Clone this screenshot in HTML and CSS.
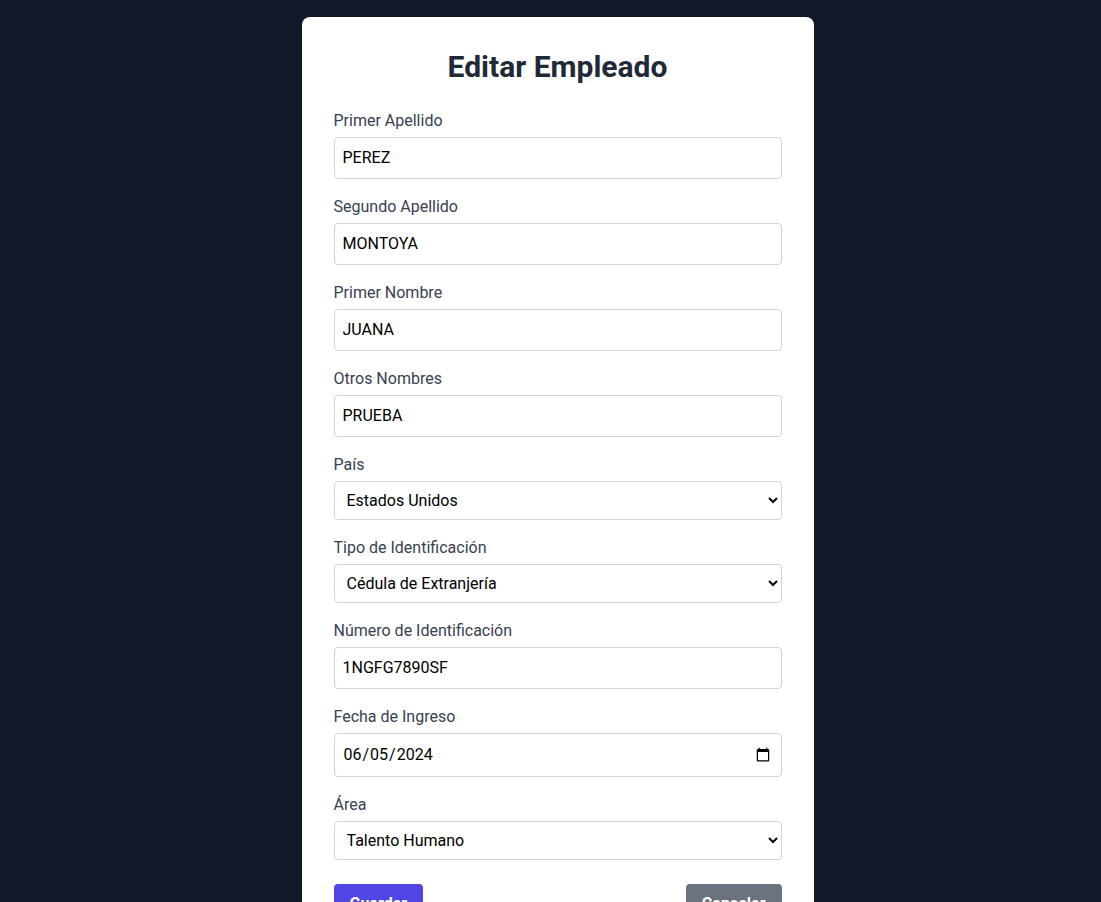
FILE: index.html
```html
<!DOCTYPE html>
<html lang="es">
<head>
<meta charset="utf-8">
<meta name="viewport" content="width=device-width, initial-scale=1">
<title>Editar Empleado</title>
<link rel="stylesheet" href="styles.css">
</head>
<body>
<main class="page">
  <form class="card">
    <h1 class="title">Editar Empleado</h1>
    <div class="field"><label for="apellido1">Primer Apellido</label><input class="control" id="apellido1" type="text" value="PEREZ"></div>
    <div class="field"><label for="apellido2">Segundo Apellido</label><input class="control" id="apellido2" type="text" value="MONTOYA"></div>
    <div class="field"><label for="nombre1">Primer Nombre</label><input class="control" id="nombre1" type="text" value="JUANA"></div>
    <div class="field"><label for="nombre2">Otros Nombres</label><input class="control" id="nombre2" type="text" value="PRUEBA"></div>
    <div class="field"><label for="pais">País</label><select class="control" id="pais"><option>Colombia</option><option selected>Estados Unidos</option></select></div>
    <div class="field"><label for="tipo">Tipo de Identificación</label><select class="control" id="tipo"><option>Cédula de Ciudadanía</option><option selected>Cédula de Extranjería</option><option>Pasaporte</option></select></div>
    <div class="field"><label for="numero">Número de Identificación</label><input class="control" id="numero" type="text" value="1NGFG7890SF"></div>
    <div class="field"><label for="fecha">Fecha de Ingreso</label><input class="control" id="fecha" type="date" value="2024-06-05"></div>
    <div class="field"><label for="area">Área</label><select class="control" id="area"><option selected>Talento Humano</option><option>Administración</option></select></div>
    <div class="actions">
      <button class="button save" type="submit">Guardar</button>
      <button class="button cancel" type="button">Cancelar</button>
    </div>
  </form>
</main>
</body>
</html>
```
FILE: styles.css
```css
*, *::before, *::after { box-sizing: border-box; }
body {
  margin: 0;
  background: #111827;
  color: #000;
  font: 16px/24px Roboto, sans-serif;
}
.page {
  display: flex;
  justify-content: center;
  padding: 17px 0 16px 14px;
}
.card {
  width: 100%;
  max-width: 512px;
  padding: 32px;
  border-radius: 8px;
  background: #fff;
}
.title {
  margin: 0 0 24px;
  color: #1f2937;
  font-size: 30px;
  line-height: 36px;
  font-weight: 700;
  text-align: center;
}
.field { margin-bottom: 16px; }
.field label { display: block; margin-bottom: 4px; color: #374151; }
.control {
  display: block;
  width: 100%;
  padding: 8px;
  border: 1px solid #d1d5db;
  border-radius: 4px;
  background: #fff;
  color: #000;
  font: inherit;
}
select.control { line-height: normal; }
.actions {
  display: flex;
  justify-content: space-between;
  padding-top: 8px;
}
.button {
  padding: 8px 16px;
  border: 0;
  border-radius: 4px;
  color: #fff;
  font: inherit;
  font-weight: 700;
}
.save { background: #4f46e5; }
.cancel { background: #6b7280; }
```
